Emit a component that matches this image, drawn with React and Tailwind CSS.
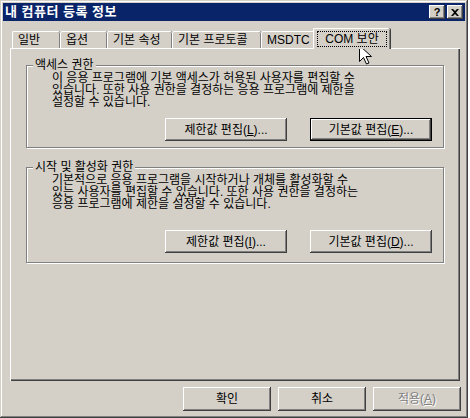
import React from 'react';

const bevel = 'shadow-[inset_-1px_-1px_#404040,inset_1px_1px_#ffffff,inset_-2px_-2px_#808080]';

const Btn = ({ children, className = '', disabled = false, def = false }) => (
  <div
    className={`flex items-center justify-center bg-[#d4d0c8] ${
      def
        ? 'shadow-[inset_0_0_0_1px_#000000,inset_-2px_-2px_#404040,inset_2px_2px_#ffffff,inset_-3px_-3px_#808080]'
        : bevel
    } ${disabled ? 'text-[#808080] [text-shadow:1px_1px_0_#ffffff]' : 'text-black'} ${className}`}
  >
    {children}
  </div>
);

const Tab = ({ label, w }) => (
  <div
    className={`flex h-[17px] items-center justify-start rounded-t-[2px] border-l border-t border-white pl-[5px] ${w} shadow-[inset_-1px_0_#808080,1px_0_#404040]`}
  >
    {label}
  </div>
);

const Group = ({ title, lines, buttons, btnTop, pb }) => (
  <div className={`flex flex-col border border-[#808080] shadow-[inset_1px_1px_#ffffff,1px_1px_#ffffff] ${pb}`}>
    <span className="-mt-[8px] ml-[6px] h-[14px] self-start bg-[#d4d0c8] px-[2px] leading-[14px]">{title}</span>
    <div className="pl-[25px] leading-[12px] whitespace-nowrap">
      {lines.map((l) => (
        <div key={l}>{l}</div>
      ))}
    </div>
    <div className={`flex justify-end gap-[23px] pr-[11px] ${btnTop}`}>
      {buttons.map((b, i) => (
        <Btn key={i} className="h-[23px] w-[122px]" def={i === 1 && title === '액세스 권한'}>
          {b}
        </Btn>
      ))}
    </div>
  </div>
);

export default function App() {
  return (
    <div className="relative h-[418px] w-[470px] bg-white text-[12px] text-black [font-family:'Liberation_Sans','Noto_Sans_CJK_KR',sans-serif]">
      <div className="flex h-[418px] w-[468px] flex-col bg-[#d4d0c8] p-[3px] shadow-[inset_-1px_-1px_#404040,inset_1px_1px_#d4d0c8,inset_-2px_-2px_#808080,inset_2px_2px_#ffffff]">
        {/* title bar */}
        <div className="flex h-[18px] items-center justify-between bg-[#0a246a] pl-[2px] pr-[2px]">
          <span className="text-[13px] font-bold leading-[14px] tracking-[0.5px] text-white">내 컴퓨터 등록 정보</span>
          <div className="flex gap-[2px]">
            <Btn className="h-[14px] w-[16px] text-[11px] font-bold leading-none">?</Btn>
            <Btn className="h-[14px] w-[16px]">
              <svg width="8" height="7" viewBox="0 0 8 7">
                <path d="M0 0h2l2 2 2-2h2L5 3.5 8 7H6L4 5 2 7H0l3-3.5z" fill="#000" />
              </svg>
            </Btn>
          </div>
        </div>

        {/* tabs */}
        <div className="ml-[7px] mt-[7px] flex h-[20px] items-end pl-[2px]">
          <Tab label="일반" w="w-[48px]" />
          <Tab label="옵션" w="w-[47px]" />
          <Tab label="기본 속성" w="w-[65px]" />
          <Tab label="기본 프로토콜" w="w-[89px]" />
          <Tab label="MSDTC" w="w-[54px]" />
          <div className="relative z-10 -mx-[2px] -mb-[1px] flex h-[21px] w-[77px] rounded-t-[2px] border-l border-t border-white bg-[#d4d0c8] px-[3px] pb-[2px] pt-[2px] shadow-[inset_-1px_0_#808080,1px_0_#404040]">
            <span className="flex flex-1 items-center justify-center border border-dotted border-black">COM 보안</span>
          </div>
        </div>

        {/* panel */}
        <div className="ml-[7px] flex h-[333px] w-[450px] flex-col px-[16px] pt-[17px] shadow-[inset_1px_1px_#ffffff,inset_-1px_-1px_#404040,inset_-2px_-2px_#808080]">
          <Group
            title="액세스 권한"
            lines={[
              '이 응용 프로그램에 기본 액세스가 허용된 사용자를 편집할 수',
              '있습니다. 또한 사용 권한을 결정하는 응용 프로그램에 제한을',
              '설정할 수 있습니다.',
            ]}
            buttons={[
              <span>제한값 편집(<u>L</u>)...</span>,
              <span>기본값 편집(<u>E</u>)...</span>,
            ]}
            btnTop="mt-[10px]"
            pb="pb-[6px]"
          />
          <div className="mt-[19px]">
            <Group
              title="시작 및 활성화 권한"
              lines={[
                '기본적으로 응용 프로그램을 시작하거나 개체를 활성화할 수',
                '있는 사용자를 편집할 수 있습니다. 또한 사용 권한을 결정하는',
                '응용 프로그램에 제한을 설정할 수 있습니다.',
              ]}
              buttons={[
                <span>제한값 편집(<u>I</u>)...</span>,
                <span>기본값 편집(<u>D</u>)...</span>,
              ]}
              btnTop="mt-[20px]"
              pb="pb-[9px]"
            />
          </div>
        </div>

        {/* dialog buttons */}
        <div className="mr-[4px] mt-[6px] flex justify-end gap-[7px]">
          <Btn className="h-[24px] w-[88px]">확인</Btn>
          <Btn className="h-[24px] w-[88px]">취소</Btn>
          <Btn className="h-[24px] w-[88px]" disabled>
            적용(<u>A</u>)
          </Btn>
        </div>
      </div>

      {/* mouse cursor */}
      <svg className="absolute left-[359px] top-[45px]" width="13" height="20" viewBox="0 0 13 20">
        <path d="M0.5 0.5v16l4-4 3 6.5 2.5-1-3-6.5h5.5z" fill="#fff" stroke="#000" strokeWidth="1" />
      </svg>
    </div>
  );
}
